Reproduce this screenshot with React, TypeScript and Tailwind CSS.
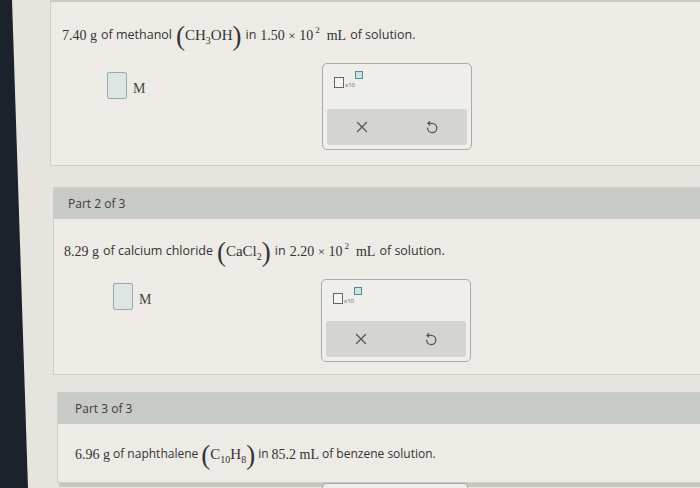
const serif = "font-['Liberation_Serif','Times_New_Roman',serif]"
const sans = "font-['Open_Sans','DejaVu_Sans',sans-serif]"

function Paren({ children }: { children: React.ReactNode }) {
  return (
    <span className={`${serif} text-[27px] leading-none text-[#333] relative top-[1px]`}>
      {children}
    </span>
  )
}

function Sub({ children }: { children: React.ReactNode }) {
  return <sub className="text-[10px] relative top-[4px] bottom-auto">{children}</sub>
}

function Sci({ mant, exp }: { mant: string; exp: string }) {
  return (
    <span className={`${serif} text-[14px] text-[#333]`}>
      {mant} <span className="text-[13px]">×</span> 10
      <sup className="text-[9px] relative -top-[7px] ml-[2px] mr-[3px]">{exp}</sup>
    </span>
  )
}

function AnswerBox() {
  return (
    <div className="flex items-start gap-[6px]">
      <div className="w-[20px] h-[27px] border-[1.5px] border-[#93aaa7] bg-[#dde6e3] rounded-[2px]" />
      <span className={`${serif} text-[14px] text-[#444] mt-[6px]`}>M</span>
    </div>
  )
}

function UndoIcon() {
  return (
    <svg width="14" height="16" viewBox="0 0 14 16" fill="none" stroke="#555" strokeWidth="1.3" strokeLinecap="round" strokeLinejoin="round">
      <path d="M4.6 2.6 L3 4.4 L4.8 6.1" />
      <path d="M3.2 4.4 H7.2 A4.6 4.6 0 1 1 2.6 9.2" />
    </svg>
  )
}

function ToolPanel({ height }: { height: string }) {
  return (
    <div className={`w-[150px] ${height} border border-[#aaaaa7] rounded-[5px] bg-[#f0eeea] px-[4px] pb-[4px] flex flex-col justify-between`}>
      <div className="flex items-end pl-[7px] pt-[13px]">
        <div className="w-[10px] h-[11px] border border-[#666] bg-[#f4f4f2]" />
        <span className={`${sans} text-[6px] leading-none text-[#555] ml-[1px]`}>x10</span>
        <div className="w-[8px] h-[8px] border border-[#4e8f92] bg-[#cfe2e1] self-start -mt-[6px]" />
      </div>
      <div className="h-[36px] bg-[#d4d4d1] rounded-[3px] grid grid-cols-2 items-center">
        <div className="flex justify-center">
          <svg width="12" height="12" viewBox="0 0 12 12" stroke="#555" strokeWidth="1.3" strokeLinecap="round">
            <path d="M1.5 1.5 L10.5 10.5 M10.5 1.5 L1.5 10.5" />
          </svg>
        </div>
        <div className="flex justify-center">
          <UndoIcon />
        </div>
      </div>
    </div>
  )
}

function PartHeader({ label, pad }: { label: string; pad: string }) {
  return (
    <div className={`h-[31px] bg-[#c8cac6] flex items-center ${pad}`}>
      <span className={`${sans} text-[12px] text-[#3d3d3d]`}>{label}</span>
    </div>
  )
}

export default function App() {
  return (
    <div className="w-[700px] h-[488px] overflow-hidden bg-[#1b222c]">
      <div className="h-full bg-[#e7e4df] [clip-path:polygon(12px_0,100%_0,100%_100%,28px_100%)] flex flex-col">
        <div className="h-[2px] bg-[#cdcac4] ml-[50px]" />

        {/* Part 1 */}
        <div className="ml-[50px] h-[164px] border border-t-0 border-r-0 border-[#d0cdc7] bg-[#eeebe6] rounded-bl-[2px]">
          <div className="h-[24px] mt-[21px] pl-[11px] flex items-center gap-[4px] whitespace-nowrap">
            <span className={`${serif} text-[14px] text-[#333]`}>7.40 g</span>
            <span className={`${sans} text-[12.5px] text-[#333]`}>of methanol</span>
            <span className="flex items-center">
              <Paren>(</Paren>
              <span className={`${serif} text-[15px] text-[#333]`}>
                CH<Sub>3</Sub>OH
              </span>
              <Paren>)</Paren>
            </span>
            <span className={`${sans} text-[12.5px] text-[#333]`}>in</span>
            <Sci mant="1.50" exp="2" />
            <span className={`${serif} text-[14px] text-[#333]`}>mL</span>
            <span className={`${sans} text-[12.5px] text-[#333]`}>of solution.</span>
          </div>
          <div className="flex items-start mt-[16px]">
            <div className="w-[271px] pl-[56px] pt-[9px]">
              <AnswerBox />
            </div>
            <ToolPanel height="h-[87px]" />
          </div>
        </div>

        {/* Part 2 */}
        <div className="ml-[53px] mt-[21px] h-[188px] border border-r-0 border-[#d0cdc7] bg-[#eeebe6]">
          <PartHeader label="Part 2 of 3" pad="pl-[14px]" />
          <div className="h-[24px] mt-[20px] pl-[10px] flex items-center gap-[4px] whitespace-nowrap">
            <span className={`${serif} text-[14px] text-[#333]`}>8.29 g</span>
            <span className={`${sans} text-[12.5px] text-[#333]`}>of calcium chloride</span>
            <span className="flex items-center">
              <Paren>(</Paren>
              <span className={`${serif} text-[15px] text-[#333]`}>
                CaCl<Sub>2</Sub>
              </span>
              <Paren>)</Paren>
            </span>
            <span className={`${sans} text-[12.5px] text-[#333]`}>in</span>
            <Sci mant="2.20" exp="2" />
            <span className={`${serif} text-[14px] text-[#333]`}>mL</span>
            <span className={`${sans} text-[12.5px] text-[#333]`}>of solution.</span>
          </div>
          <div className="flex items-start mt-[16px]">
            <div className="w-[267px] pl-[59px] pt-[4px]">
              <AnswerBox />
            </div>
            <ToolPanel height="h-[83px]" />
          </div>
        </div>

        {/* Part 3 */}
        <div className="ml-[57px] mt-[17px] h-[91px] border border-r-0 border-[#d0cdc7] bg-[#eeebe6]">
          <PartHeader label="Part 3 of 3" pad="pl-[17px]" />
          <div className="h-[24px] mt-[18px] pl-[17px] flex items-center gap-[3px] whitespace-nowrap">
            <span className={`${serif} text-[14px] text-[#333]`}>6.96 g</span>
            <span className={`${sans} text-[12px] text-[#333]`}>of naphthalene</span>
            <span className="flex items-center">
              <Paren>(</Paren>
              <span className={`${serif} text-[15px] text-[#333]`}>
                C<Sub>10</Sub>H<Sub>8</Sub>
              </span>
              <Paren>)</Paren>
            </span>
            <span className={`${sans} text-[12px] text-[#333]`}>in</span>
            <span className={`${serif} text-[14px] text-[#333]`}>85.2 mL</span>
            <span className={`${sans} text-[12px] text-[#333]`}>of benzene solution.</span>
          </div>
        </div>
        <div className="ml-[59px] h-[4px] bg-[#c9c7c2] flex">
          <div className="ml-[263px] w-[146px] h-[8px] border border-[#a6a6a3] rounded-t-[4px] bg-[#efede9]" />
        </div>
      </div>
    </div>
  )
}
